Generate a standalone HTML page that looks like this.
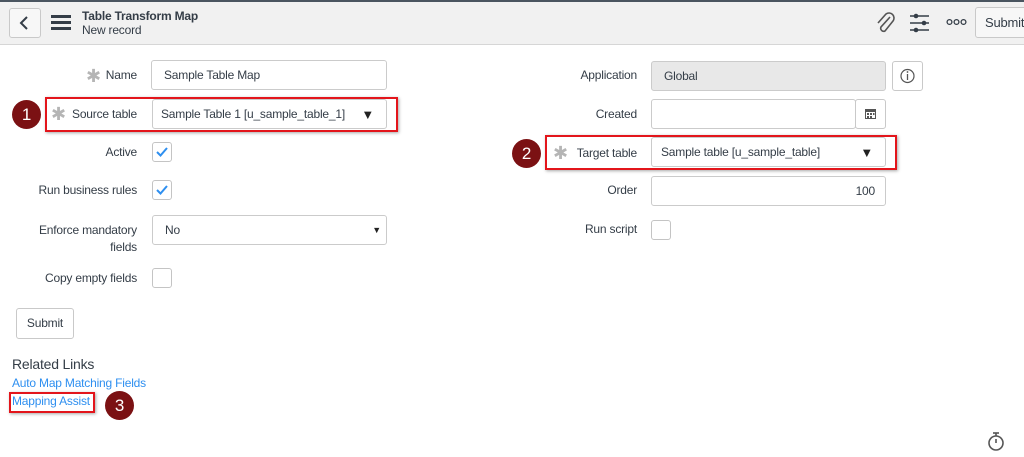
<!DOCTYPE html>
<html><head><style>
*{box-sizing:border-box;margin:0;padding:0}
body{width:1024px;height:457px;background:#fff;font-family:"Liberation Sans",sans-serif;font-size:12px;color:#343d47;position:relative;overflow:hidden;letter-spacing:-0.2px}
.a{position:absolute}
.hdr{left:0;top:0;width:1024px;height:45px;background:#f1f1f1;border-top:2px solid #4a5560;border-bottom:1px solid #d6d6d6}
.lbl{position:absolute;text-align:right;color:#343d47;white-space:nowrap}
.inp{position:absolute;border:1px solid #cbcbcb;border-radius:3px;background:#fff;padding-left:12px;display:flex;align-items:center;color:#343d47}
.cb{position:absolute;width:20px;height:20px;border:1px solid #c4c4c4;border-radius:3px;background:#fff}
.red{position:absolute;border:2px solid #e3151b;box-shadow:1px 1px 3px rgba(0,0,0,.35)}
.badge{position:absolute;width:29px;height:29px;border-radius:50%;background:#7b1113;color:#fff;font-size:17px;text-align:center;line-height:29px}
.star{color:#b5b5b5;font-size:18px;position:absolute}
.btn{position:absolute;border:1px solid #c9c9c9;border-radius:3px;background:#fff;text-align:center}
.arrow{position:absolute;right:12px;font-size:11px;color:#222}
</style></head><body>
<div class="a hdr"></div>
<div class="btn" style="left:9px;top:8px;width:32px;height:30px;background:#f7f7f7"><svg width="30" height="28"><path d="M17 8 L11 14 L17 20" stroke="#343d47" stroke-width="2" fill="none"/></svg></div>
<svg class="a" style="left:51px;top:14px" width="21" height="17"><rect y="1" width="20" height="3" fill="#343d47"/><rect y="7" width="20" height="3" fill="#343d47"/><rect y="13" width="20" height="3" fill="#343d47"/></svg>
<div class="a" style="left:82px;top:9px;font-weight:bold;font-size:12px">Table Transform Map</div>
<div class="a" style="left:82px;top:23px;font-size:12px">New record</div>
<svg class="a" style="left:874px;top:11px" width="22" height="24"><path d="M16 6 L7 16 a3 3 0 0 0 4 4 L19 10 a5 5 0 0 0 -7 -7 L4 12" stroke="#555" stroke-width="1.6" fill="none"/></svg>
<svg class="a" style="left:909px;top:12px" width="22" height="22"><g stroke="#343d47" stroke-width="1.6"><line x1="1" y1="4" x2="20" y2="4"/><line x1="1" y1="11" x2="20" y2="11"/><line x1="1" y1="18" x2="20" y2="18"/></g><circle cx="7" cy="4" r="2.3" fill="#343d47"/><circle cx="15" cy="11" r="2.3" fill="#343d47"/><circle cx="7" cy="18" r="2.3" fill="#343d47"/></svg>
<svg class="a" style="left:946px;top:18px" width="22" height="8"><g stroke="#343d47" stroke-width="1.3" fill="none"><circle cx="3.5" cy="4" r="2.4"/><circle cx="10.5" cy="4" r="2.4"/><circle cx="17.5" cy="4" r="2.4"/></g></svg>
<div class="btn" style="left:975px;top:7px;width:60px;height:31px;background:#f7f7f7;line-height:29px;text-align:left;padding-left:9px;font-size:13px">Submit</div>

<span class="star" style="left:86px;top:66px">✱</span>
<div class="lbl" style="right:887px;top:68px">Name</div>
<div class="inp" style="left:151px;top:60px;width:236px;height:30px">Sample Table Map</div>

<div class="red" style="left:45px;top:97px;width:353px;height:35px"></div>
<div class="badge" style="left:12px;top:100px">1</div>
<span class="star" style="left:51px;top:104px">✱</span>
<div class="lbl" style="right:887px;top:107px">Source table</div>
<div class="inp" style="left:152px;top:99px;width:235px;height:30px;padding-left:8px">Sample Table 1 [u_sample_table_1]<span class="arrow" style="font-size:13px">▼</span></div>

<div class="lbl" style="right:887px;top:145px">Active</div>
<div class="cb" style="left:152px;top:142px"><svg width="18" height="18"><path d="M4 9 L7.5 12.5 L14 5" stroke="#2e8ff0" stroke-width="2" fill="none"/></svg></div>
<div class="lbl" style="right:887px;top:183px">Run business rules</div>
<div class="cb" style="left:152px;top:180px"><svg width="18" height="18"><path d="M4 9 L7.5 12.5 L14 5" stroke="#2e8ff0" stroke-width="2" fill="none"/></svg></div>
<div class="lbl" style="right:887px;top:222px;line-height:17px">Enforce mandatory<br>fields</div>
<div class="inp" style="left:152px;top:215px;width:235px;height:30px">No<span class="arrow" style="right:5px;font-size:9px">▼</span></div>
<div class="lbl" style="right:887px;top:271px">Copy empty fields</div>
<div class="cb" style="left:152px;top:268px"></div>

<div class="btn" style="left:16px;top:308px;width:58px;height:31px;line-height:29px">Submit</div>
<div class="a" style="left:12px;top:356px;font-size:14px;color:#343d47">Related Links</div>
<div class="a" style="left:12px;top:376px;color:#2e8ff0">Auto Map Matching Fields</div>
<div class="red" style="left:9px;top:392px;width:86px;height:21px"></div>
<div class="a" style="left:12px;top:394px;color:#2e8ff0">Mapping Assist</div>
<div class="badge" style="left:105px;top:391px">3</div>

<div class="lbl" style="right:387px;top:68px">Application</div>
<div class="inp" style="left:651px;top:61px;width:235px;height:30px;background:#e8e8e8">Global</div>
<div class="btn" style="left:892px;top:61px;width:31px;height:30px"><svg width="29" height="28"><circle cx="14.5" cy="14" r="6.5" stroke="#555" fill="none" stroke-width="1.2"/><line x1="14.5" y1="12" x2="14.5" y2="18" stroke="#555" stroke-width="1.3"/><circle cx="14.5" cy="10" r=".9" fill="#555"/></svg></div>
<div class="lbl" style="right:387px;top:107px">Created</div>
<div class="inp" style="left:651px;top:99px;width:205px;height:30px"></div>
<div class="btn" style="left:855px;top:99px;width:31px;height:30px"><svg width="29" height="28"><rect x="9" y="9" width="11" height="10" fill="#555"/><rect x="10" y="12" width="9" height="6" fill="#fff"/><g fill="#555"><rect x="11" y="13" width="2" height="2"/><rect x="14" y="13" width="2" height="2"/><rect x="17" y="13" width="1.5" height="2"/><rect x="11" y="16" width="2" height="2"/><rect x="14" y="16" width="2" height="2"/></g></svg></div>

<div class="red" style="left:545px;top:135px;width:352px;height:35px"></div>
<div class="badge" style="left:512px;top:139px">2</div>
<span class="star" style="left:553px;top:143px">✱</span>
<div class="lbl" style="right:387px;top:146px">Target table</div>
<div class="inp" style="left:651px;top:137px;width:235px;height:30px;padding-left:9px">Sample table [u_sample_table]<span class="arrow" style="font-size:13px">▼</span></div>
<div class="lbl" style="right:387px;top:183px">Order</div>
<div class="inp" style="left:651px;top:176px;width:235px;height:30px;justify-content:flex-end;padding-right:10px">100</div>
<div class="lbl" style="right:387px;top:222px">Run script</div>
<div class="cb" style="left:651px;top:220px"></div>

<svg class="a" style="left:986px;top:431px" width="20" height="22"><circle cx="10" cy="12" r="7" stroke="#555" stroke-width="1.6" fill="none"/><line x1="10" y1="2" x2="10" y2="5" stroke="#555" stroke-width="1.6"/><line x1="7" y1="2" x2="13" y2="2" stroke="#555" stroke-width="1.6"/><line x1="10" y1="12" x2="10" y2="8" stroke="#555" stroke-width="1.6"/></svg>
</body></html>
